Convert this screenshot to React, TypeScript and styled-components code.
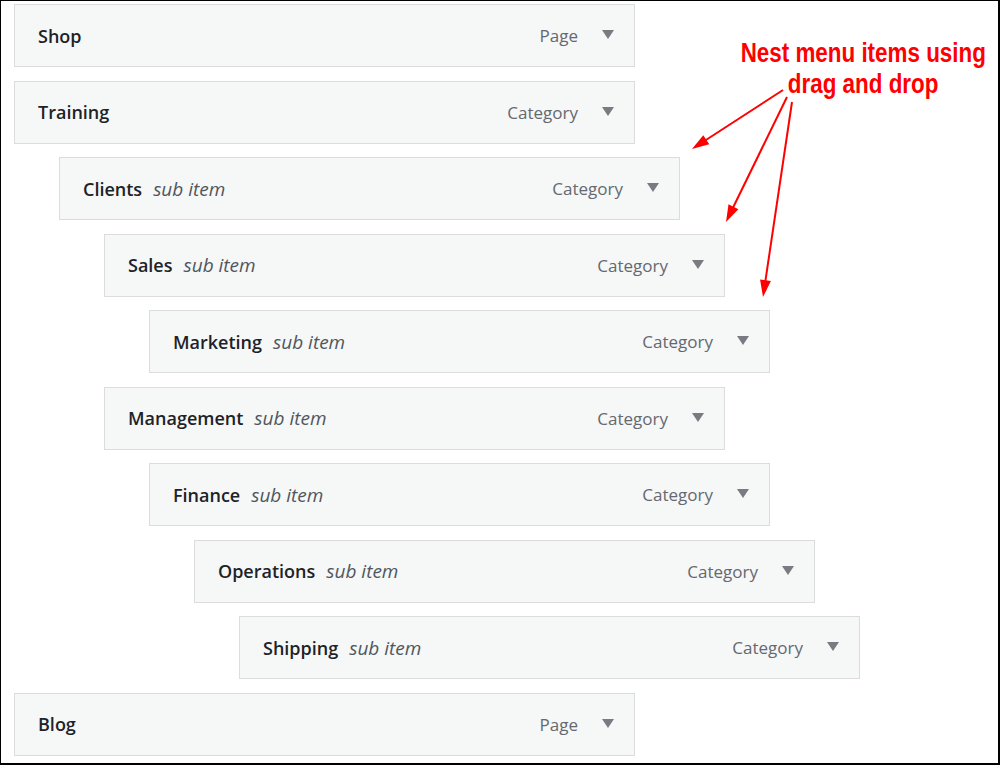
import styled, { createGlobalStyle } from "styled-components";

const GlobalStyle = createGlobalStyle`
	html, body {
		margin: 0;
		padding: 0;
		background: #fff;
	}
	* {
		box-sizing: border-box;
	}
`;

type MenuItem = {
	title: string;
	kind: "Page" | "Category";
	depth: number;
};

const items: MenuItem[] = [
	{ title: "Shop", kind: "Page", depth: 0 },
	{ title: "Training", kind: "Category", depth: 0 },
	{ title: "Clients", kind: "Category", depth: 1 },
	{ title: "Sales", kind: "Category", depth: 2 },
	{ title: "Marketing", kind: "Category", depth: 3 },
	{ title: "Management", kind: "Category", depth: 2 },
	{ title: "Finance", kind: "Category", depth: 3 },
	{ title: "Operations", kind: "Category", depth: 4 },
	{ title: "Shipping", kind: "Category", depth: 5 },
	{ title: "Blog", kind: "Page", depth: 0 },
];

// arrows of the annotation: start point -> tip
const arrows = [
	{ x1: 783, y1: 90, x2: 692, y2: 149 },
	{ x1: 787, y1: 97, x2: 726, y2: 222 },
	{ x1: 792, y1: 102, x2: 763, y2: 297 },
];

const Frame = styled.div`
	position: relative;
	width: 1000px;
	height: 765px;
	border: 1px solid #000;
	border-right-width: 2px;
	border-bottom-width: 2px;
	overflow: hidden;
	font-family: "Open Sans", "Noto Sans", sans-serif;
`;

const MenuList = styled.ul`
	list-style: none;
	margin: 0;
	padding: 3px 0 0 13px;
	display: flex;
	flex-direction: column;
	gap: 13.5px;
`;

const Item = styled.li<{ $depth: number }>`
	display: flex;
	align-items: center;
	width: 621px;
	height: 63px;
	margin-left: ${(p) => p.$depth * 45}px;
	padding: 0 20px 0 23px;
	background: #f6f7f7;
	border: 1px solid #dcdcde;
`;

const Title = styled.span`
	font-size: 18px;
	font-weight: 600;
	color: #1d2327;
`;

const SubLabel = styled.span`
	margin-left: 11px;
	font-size: 19px;
	font-style: italic;
	color: #50575e;
`;

const Kind = styled.span`
	margin-left: auto;
	font-size: 17px;
	color: #646970;
`;

const Toggle = styled.span`
	margin-left: 24px;
	width: 0;
	height: 0;
	border-left: 6.5px solid transparent;
	border-right: 6.5px solid transparent;
	border-top: 9px solid #787c82;
	margin-top: -2px;
`;

const Note = styled.div`
	position: absolute;
	left: 712px;
	top: 36px;
	width: 300px;
	display: flex;
	flex-direction: column;
	align-items: center;
	color: #ff0000;
	font-family: "Liberation Sans", Arial, sans-serif;
	font-weight: 700;
	font-size: 28px;
	line-height: 31px;
`;

const NoteLine = styled.span`
	white-space: nowrap;
	transform: scaleX(0.8);
	transform-origin: center;
`;

const Overlay = styled.svg`
	position: absolute;
	left: -1px;
	top: -1px;
	pointer-events: none;
`;

const arrowHead = (a: { x1: number; y1: number; x2: number; y2: number }) => {
	const dx = a.x2 - a.x1;
	const dy = a.y2 - a.y1;
	const len = Math.hypot(dx, dy);
	const ux = dx / len;
	const uy = dy / len;
	const bx = a.x2 - ux * 17;
	const by = a.y2 - uy * 17;
	const w = 5.5;
	return `${a.x2},${a.y2} ${bx - uy * w},${by + ux * w} ${bx + uy * w},${by - ux * w}`;
};

export default function App() {
	return (
		<>
			<GlobalStyle />
			<Frame>
				<MenuList>
					{items.map((item) => (
						<Item key={item.title} $depth={item.depth}>
							<Title>{item.title}</Title>
							{item.depth > 0 && <SubLabel>sub item</SubLabel>}
							<Kind>{item.kind}</Kind>
							<Toggle />
						</Item>
					))}
				</MenuList>
				<Note>
					<NoteLine>Nest menu items using</NoteLine>
					<NoteLine>drag and drop</NoteLine>
				</Note>
				<Overlay width="1000" height="765" viewBox="0 0 1000 765">
					{arrows.map((a, i) => {
						const len = Math.hypot(a.x2 - a.x1, a.y2 - a.y1);
						const ex = a.x2 - ((a.x2 - a.x1) / len) * 12;
						const ey = a.y2 - ((a.y2 - a.y1) / len) * 12;
						return (
							<g key={i}>
								<line x1={a.x1} y1={a.y1} x2={ex} y2={ey} stroke="#ff0000" strokeWidth="2" />
								<polygon points={arrowHead(a)} fill="#ff0000" />
							</g>
						);
					})}
				</Overlay>
			</Frame>
		</>
	);
}
